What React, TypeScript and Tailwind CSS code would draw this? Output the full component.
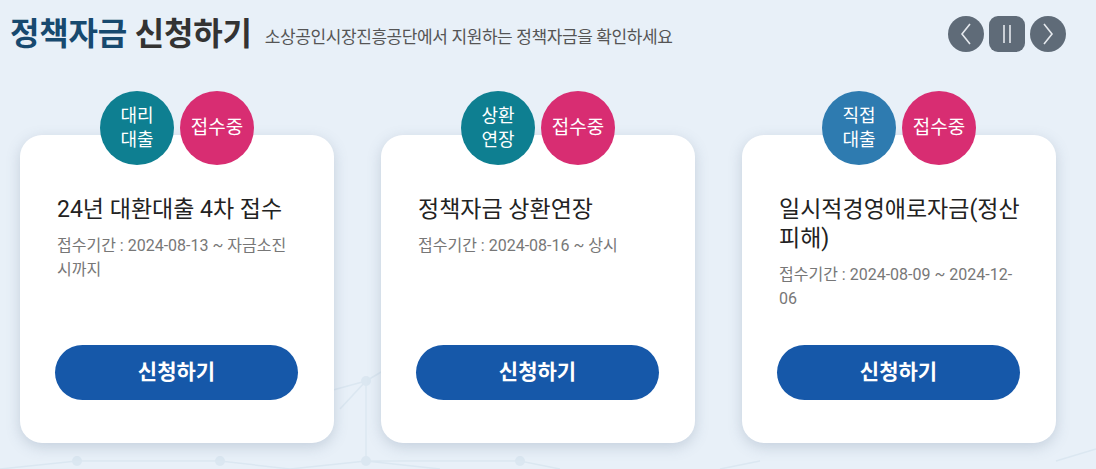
import React from 'react';

type Fund = {
  kind: string[];
  kindColor: string;
  title: string;
  period: string;
};

const FUNDS: Fund[] = [
  { kind: ['대리', '대출'], kindColor: 'bg-[#0e7f91]', title: '24년 대환대출 4차 접수', period: '접수기간 : 2024-08-13 ~ 자금소진 시까지' },
  { kind: ['상환', '연장'], kindColor: 'bg-[#0e7f91]', title: '정책자금 상환연장', period: '접수기간 : 2024-08-16 ~ 상시' },
  { kind: ['직접', '대출'], kindColor: 'bg-[#2e7bb0]', title: '일시적경영애로자금(정산 피해)', period: '접수기간 : 2024-08-09 ~ 2024-12-06' },
];

const FONT = "font-['Roboto','Noto_Sans_CJK_KR',sans-serif]";

const FundCard: React.FC<{ fund: Fund }> = ({ fund }) => (
  <div className="relative flex h-[308px] w-[314px] flex-col rounded-[22px] bg-white pb-[43px] pl-[37px] pr-[24px] pt-[60px] shadow-[0_4px_14px_rgba(90,110,140,0.25)]">
    {/* badges */}
    <div className="absolute left-[80px] top-[-44px] flex gap-[6px]">
      <div className={`flex h-[74px] w-[74px] flex-col items-center justify-center rounded-full ${fund.kindColor} text-[18px] leading-[24px] text-white`}>
        <span>{fund.kind[0]}</span>
        <span>{fund.kind[1]}</span>
      </div>
      <div className="flex h-[74px] w-[74px] items-center justify-center rounded-full bg-[#d82d72] text-[19px] text-white">
        접수중
      </div>
    </div>
    <h4 className="break-keep text-[23px] font-normal leading-[29px] text-[#222]">{fund.title}</h4>
    <p className="mt-[10px] max-w-[240px] break-keep text-[16px] leading-[24px] text-[#777]">{fund.period}</p>
    <button className="mx-[-2px] mt-auto h-[55px] w-[243px] rounded-full bg-[#1658a9] text-[21px] font-bold text-white">
      신청하기
    </button>
  </div>
);

const App: React.FC = () => {
  return (
    <div className={`relative h-[469px] w-[1096px] overflow-hidden bg-[#e8f0f8] ${FONT}`}>
      {/* faint network pattern */}
      <svg className="absolute bottom-0 left-0" width="1096" height="140" viewBox="0 0 1096 140" fill="none">
        <g stroke="#dbe7f1" strokeWidth="1.5">
          <path d="M0 140 L77 132 L220 132 L290 140" />
          <path d="M340 80 L366 52 L366 132 L290 140" />
          <path d="M366 132 L440 140 M366 132 L520 132 L560 140" />
          <path d="M300 70 L366 52 L420 20" />
          <path d="M720 140 L760 132 M1056 132 L1096 120" />
        </g>
        <g fill="#dbe7f1">
          <circle cx="77" cy="132" r="5" />
          <circle cx="220" cy="132" r="5" />
          <circle cx="366" cy="52" r="5" />
          <circle cx="366" cy="132" r="5" />
          <circle cx="520" cy="132" r="5" />
        </g>
      </svg>

      <div className="relative">
        {/* header */}
        <div className="flex items-center justify-between pl-[10px] pr-[30px] pt-[14px]">
          <div className="flex items-end gap-[13px]">
            <h2 className="text-[32px] font-bold leading-[40px] tracking-[-0.2px]">
              <span className="text-[#17496f]">정책자금</span> <span className="text-[#333]">신청하기</span>
            </h2>
            <p className="pb-[4px] text-[17px] tracking-[-0.4px] text-[#555]">소상공인시장진흥공단에서 지원하는 정책자금을 확인하세요</p>
          </div>
          <div className="flex items-center gap-[5px]">
            <button className="flex h-[36px] w-[36px] items-center justify-center rounded-full bg-[#5f6b78]">
              <svg width="14" height="24" viewBox="0 0 14 24" fill="none" stroke="#e5e9ee" strokeWidth="1.6">
                <path d="M11 2 L3 12 L11 22" />
              </svg>
            </button>
            <button className="flex h-[36px] w-[36px] items-center justify-center rounded-[9px] bg-[#5f6b78]">
              <svg width="14" height="20" viewBox="0 0 14 20" fill="none" stroke="#e5e9ee" strokeWidth="1.6">
                <path d="M4 1 V19 M10 1 V19" />
              </svg>
            </button>
            <button className="flex h-[36px] w-[36px] items-center justify-center rounded-full bg-[#5f6b78]">
              <svg width="14" height="24" viewBox="0 0 14 24" fill="none" stroke="#e5e9ee" strokeWidth="1.6">
                <path d="M3 2 L11 12 L3 22" />
              </svg>
            </button>
          </div>
        </div>

        {/* cards */}
        <div className="mt-[81px] flex gap-[47px] pl-[20px]">
          {FUNDS.map((f) => (
            <FundCard key={f.title} fund={f} />
          ))}
        </div>
      </div>
    </div>
  );
};

export default App;
